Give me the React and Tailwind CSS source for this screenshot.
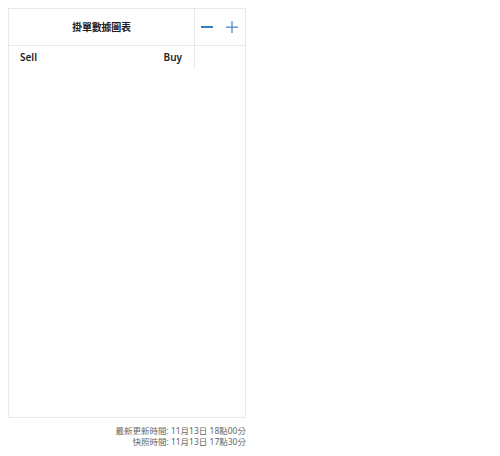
import React from 'react';

export default function App() {
  return (
    <div className="w-[500px] h-[456px] bg-white p-2" style={{ fontFamily: '"Noto Sans", "Noto Sans CJK TC", sans-serif' }}>
      <div className="w-[238px] h-[410px] border border-[#e3eaea] flex flex-col">
        <div className="flex h-[37px] border-b border-[#e3eaea]">
          <div className="w-[186px] border-r border-[#e3eaea] flex items-center justify-center text-[10px] font-bold text-[#222] tracking-tight">
            掛單數據圖表
          </div>
          <div className="flex-1 flex items-center pl-[6px] gap-[13px]">
            <svg width="12" height="12" viewBox="0 0 12 12" shapeRendering="crispEdges">
              <rect x="0" y="5" width="12" height="2" fill="#3a7cc4" />
            </svg>
            <svg width="12" height="12" viewBox="0 0 12 12">
              <rect x="0" y="5.5" width="12" height="1.4" fill="#5a90cf" />
              <rect x="5.3" y="0" width="1.4" height="12" fill="#5a90cf" />
            </svg>
          </div>
        </div>
        <div className="flex h-[22px]">
          <div className="w-[186px] border-r border-[#e3eaea] flex items-center justify-between pl-[11px] pr-[12px] text-[10px] font-semibold text-[#222]">
            <span>Sell</span>
            <span>Buy</span>
          </div>
        </div>
      </div>
      <div className="w-[238px] mt-[7px] text-right text-[8.5px] leading-[11px] text-[#666]">
        <div>最新更新時間: 11月13日 18點00分</div>
        <div>快照時間: 11月13日 17點30分</div>
      </div>
    </div>
  );
}
